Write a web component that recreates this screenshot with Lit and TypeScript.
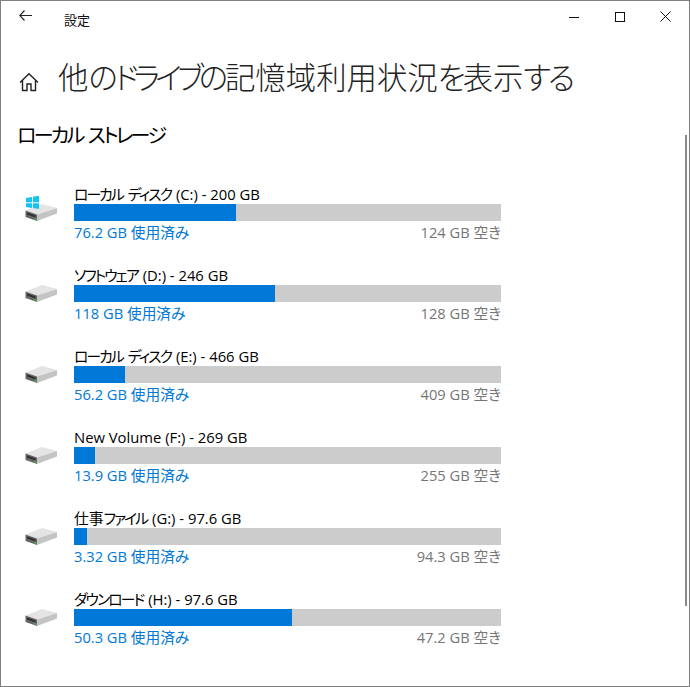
import { LitElement, html, css, svg } from "lit";
import { customElement } from "lit/decorators.js";

interface Drive { name: string; pct: number; used: string; free: string; sys?: boolean; }

const drives: Drive[] = [
  { name: "ローカル ディスク (C:) - 200 GB", pct: 37.9, used: "76.2 GB 使用済み", free: "124 GB 空き", sys: true },
  { name: "ソフトウェア (D:) - 246 GB", pct: 47.1, used: "118 GB 使用済み", free: "128 GB 空き" },
  { name: "ローカル ディスク (E:) - 466 GB", pct: 12, used: "56.2 GB 使用済み", free: "409 GB 空き" },
  { name: "New Volume (F:) - 269 GB", pct: 5, used: "13.9 GB 使用済み", free: "255 GB 空き" },
  { name: "仕事ファイル (G:) - 97.6 GB", pct: 3, used: "3.32 GB 使用済み", free: "94.3 GB 空き" },
  { name: "ダウンロード (H:) - 97.6 GB", pct: 51, used: "50.3 GB 使用済み", free: "47.2 GB 空き" },
];

/** Wraps kana runs so their tighter tracking can be set in CSS. */
const kana = (text: string) =>
  text.split(/([ァ-ヶー]+|[ぁ-ん]+)/).map((part) =>
    /^[ァ-ヶー]/.test(part)
      ? html`<span class="kata">${part}</span>`
      : /^[ぁ-ん]/.test(part)
      ? html`<span class="hira">${part}</span>`
      : part
  );

const driveIcon = (sys?: boolean) => html`<svg class="drive" width="34" height="38" viewBox="0 0 34 38">
  <path d="M1.5 25.5 L18 19 L33 23 L13 29.5 Z" fill="#e4e4e4"/>
  <path d="M13 29.5 L33 23 L33 28.5 L13 36 Z" fill="#c4c4c4"/>
  <path d="M1.5 25.5 L13 29.5 L13 36 L1.5 32 Z" fill="#666"/>
  <path d="M3 27.5 L11.5 30.5 L11.5 32.5 L3 29.5 Z" fill="#2e2e2e"/>
  <path d="M10 33 L12.5 33.8 L12.5 35 L10 34.2 Z" fill="#4fb84f"/>
  ${sys ? svg`<path d="M2 13 L8 12 L8 17.2 L2 17.2 Z M9 11.8 L15 10.8 L15 17.2 L9 17.2 Z M2 18.2 L8 18.2 L8 23 L2 22 Z M9 18.2 L15 18.2 L15 24 L9 23.1 Z" fill="#12c3f4"/>` : ""}
</svg>`;

@customElement("app-root")
export class AppRoot extends LitElement {
  static styles = css`
    :host {
      display: block;
      width: 690px;
      height: 687px;
      box-sizing: border-box;
      border: 1px solid #7f7f7f;
      background: #fff;
      position: relative;
      overflow: hidden;
      font-family: "Open Sans", "Noto Sans CJK JP", sans-serif;
      font-feature-settings: "palt";
      color: #000;
    }
    .titlebar {
      display: flex;
      align-items: center;
      height: 31px;
    }
    .back { width: 13px; height: 11px; margin-left: 18px; margin-top: -3px; }
    .apptitle { margin-left: 32px; font-size: 13px; color: #111; line-height: 16px; margin-top: 7px; }
    .controls { margin-left: auto; display: flex; align-items: center; gap: 35px; padding-right: 18px; }
    .controls svg { display: block; }
    .controls svg:first-child { margin-right: 1px; }
    .heading {
      display: flex;
      align-items: center;
      margin-top: 28px;
      height: 38px;
      padding-left: 18px;
    }
    .home { width: 20px; height: 20px; margin-top: 5px; }
    h1 {
      margin: -2px 0 0 19px;
      font-size: 30.4px;
      font-weight: 300;
      line-height: 38px;
      white-space: nowrap;
      color: #222;
    }
    h1 .kata { letter-spacing: -4.9px; }
    h1 .hira { letter-spacing: -3.1px; }
    h2 {
      margin: 25px 0 0 16px;
      font-size: 20px;
      font-weight: 400;
      line-height: 26px;
      color: #000;
      white-space: nowrap;
    }
    h2 .kata { letter-spacing: -2.7px; }
    .list {
      display: flex;
      flex-direction: column;
      margin-top: 37px;
      padding-left: 23px;
    }
    .row {
      display: flex;
      height: 81px;
      align-items: flex-start;
    }
    .drive { flex: none; margin-top: -1px; margin-right: 16px; }
    .info { width: 427px; margin-top: -1px; }
    .name { font-size: 14.8px; line-height: 18px; height: 18px; white-space: nowrap; color: #000; }
    .name .kata { letter-spacing: -1.9px; margin-right: 1px; }
    .bar { height: 17px; background: #ccc; margin-top: 1px; }
    .fill { height: 100%; background: #0078d7; }
    .meta {
      display: flex;
      justify-content: space-between;
      font-size: 14.7px;
      line-height: 18px;
      margin-top: 2px;
    }
    .used { color: #0078d7; }
    .free { color: #767676; }
    .thumb {
      position: absolute;
      right: 2px;
      top: 134px;
      width: 2px;
      height: 471px;
      background: #8a8a8a;
    }
  `;

  render() {
    return html`
      <div class="titlebar">
        <svg class="back" viewBox="0 0 13 11" fill="none" stroke="#222" stroke-width="1.1"><path d="M5.5 .5 L.8 5.5 L5.5 10.5 M1 5.5 H13"/></svg>
        <span class="apptitle">設定</span>
        <div class="controls">
          <svg width="10" height="10" viewBox="0 0 10 10" stroke="#111" fill="none"><path d="M0 5.5H10"/></svg>
          <svg width="10" height="10" viewBox="0 0 10 10" stroke="#111" fill="none"><rect x=".5" y=".5" width="9" height="9"/></svg>
          <svg width="11" height="11" viewBox="0 0 11 11" stroke="#111" fill="none"><path d="M.4 .4L10.6 10.6M10.6 .4L.4 10.6"/></svg>
        </div>
      </div>
      <div class="heading">
        <svg class="home" viewBox="0 0 20 20" fill="none" stroke="#222" stroke-width="1.4"><path d="M1 10.5 L10 1.8 L19 10.5 M3.5 8.5 V18.5 H8 V12 H12 V18.5 H16.5 V8.5"/></svg>
        <h1>${kana("他のドライブの記憶域利用状況を表示する")}</h1>
      </div>
      <h2>${kana("ローカル ストレージ")}</h2>
      <div class="list">
        ${drives.map((d) => html`
          <div class="row">
            ${driveIcon(d.sys)}
            <div class="info">
              <div class="name">${kana(d.name)}</div>
              <div class="bar"><div class="fill" style="width:${d.pct}%"></div></div>
              <div class="meta"><span class="used">${d.used}</span><span class="free">${d.free}</span></div>
            </div>
          </div>
        `)}
      </div>
      <div class="thumb"></div>
    `;
  }
}
